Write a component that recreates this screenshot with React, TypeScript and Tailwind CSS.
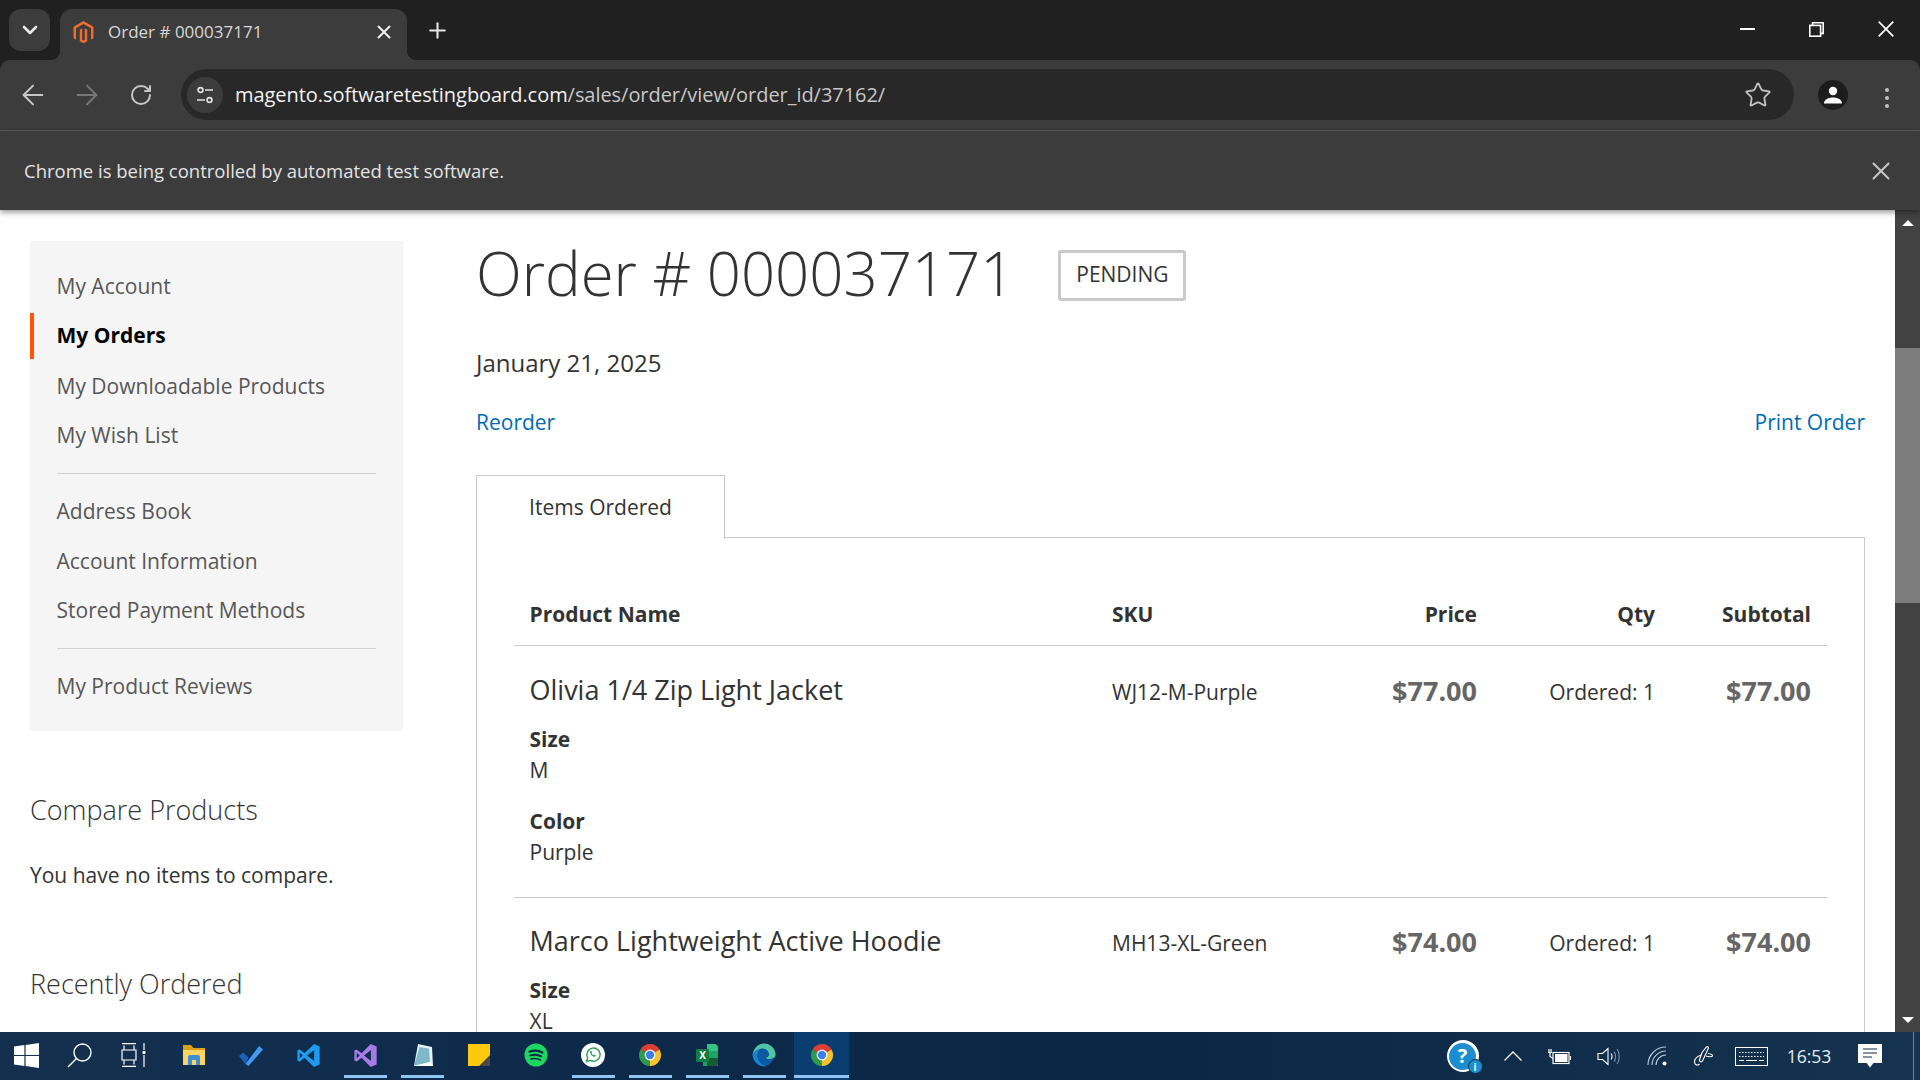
import React from 'react';
import { ArrowLeft, ArrowRight, RotateCw, Star, X, Plus, ChevronDown } from 'lucide-react';

const Magento = ({ size = 23 }: { size?: number }) => (
  <svg width={size} height={size} viewBox="0 0 24 24" fill="#ee6c2c">
    <path d="M12 0 1.6 6v12l2.6 1.5v-12L12 3l7.8 4.5v12l2.6-1.5V6z" />
    <path d="M13.3 19.5 12 20.3l-1.3-.8V7.5L8.1 9v12l3.9 2.3 3.900-2.300V9l-2.600-1.500z" />
  </svg>
);

const Chrome = () => (
  <svg width="24" height="24" viewBox="0 0 24 24">
    <path d="M12 12 2.47 6.5A11 11 0 0 1 21.53 6.5Z" fill="#dd3f33" />
    <path d="M12 12 21.53 6.5A11 11 0 0 1 12 23Z" fill="#f7c22e" />
    <path d="M12 12 12 23A11 11 0 0 1 2.47 6.5Z" fill="#2c9c4c" />
    <circle cx="12" cy="12" r="5.4" fill="#fff" />
    <circle cx="12" cy="12" r="4.2" fill="#3f7fe6" />
  </svg>
);

const TaskIcon = ({ children, line = false, active = false, w = 'w-[57px]' }: { children: React.ReactNode; line?: boolean; active?: boolean; w?: string }) => (
  <div className={`relative h-[48px] flex items-center justify-center pb-[2px] shrink-0 ${w} ${active ? 'bg-[#0a3d70]' : ''}`}>
    {children}
    {line && <div className={`absolute bottom-[2px] h-[3px] bg-[#8fc5ee] ${active ? 'left-0 right-0' : 'left-[7px] right-[7px]'}`} />}
  </div>
);

const NavItem = ({ label, cls }: { label: string; cls: string }) => (
  <div className={`flex items-center pl-[26.5px] pt-[2px] text-[21px] text-[#575757] ${cls}`}>{label}</div>
);

const Row = ({ name, sku, price, options, cls }: { name: string; sku: string; price: string; options: [string, string][]; cls: string }) => (
  <div className={`grid grid-cols-[598px_235px_130px_178px_156px] ${cls}`}>
    <div className="pl-[15.5px]">
      <div className="text-[27px] leading-[38px] text-[#333]">{name}</div>
      <div className="mt-[15px]">
        {options.map(([k, v]) => (
          <div key={k} className="mb-[20px]">
            <div className="text-[21px] leading-[31px] font-bold text-[#333]">{k}</div>
            <div className="text-[21px] leading-[31px] text-[#333]">{v}</div>
          </div>
        ))}
      </div>
    </div>
    <div className="text-[21px] leading-[38px] pt-[2px] text-[#333]">{sku}</div>
    <div className="text-[27px] leading-[38px] pt-[1px] font-bold text-[#666] text-right">{price}</div>
    <div className="text-[21px] leading-[38px] pt-[2px] text-[#333] text-right">Ordered: 1</div>
    <div className="text-[27px] leading-[38px] pt-[1px] font-bold text-[#666] text-right">{price}</div>
  </div>
);

export default function App() {
  return (
    <div className="h-screen w-screen overflow-hidden flex flex-col bg-white font-['Open_Sans',sans-serif]">
      {/* Tab strip */}
      <div className="h-[60px] shrink-0 bg-[#202020] flex items-start pt-[9px] pl-[9px] text-white">
        <div className="w-[41px] h-[42px] rounded-[12px] bg-[#3c3c3c] flex items-center justify-center">
          <ChevronDown size={24} strokeWidth={2.6} color="#e8e8e8" />
        </div>
        <div className="relative ml-[10px] w-[347px] h-[51px] rounded-t-[12px] bg-[#3c3c3c] flex items-center pl-[12px] pb-[5px]">
          <Magento />
          <span className="ml-[13px] text-[17px] text-[#d8d8d8]">Order # 000037171</span>
          <X size={22} strokeWidth={2.2} color="#f0f0f0" className="ml-auto mr-[12px]" />
          <div className="absolute bottom-0 left-[-10px] w-[10px] h-[10px] bg-[radial-gradient(circle_at_0_0,#202020_10px,#3c3c3c_10.5px)]" />
          <div className="absolute bottom-0 right-[-10px] w-[10px] h-[10px] bg-[radial-gradient(circle_at_100%_0,#202020_10px,#3c3c3c_10.5px)]" />
        </div>
        <div className="ml-[18px] h-[42px] flex items-center"><Plus size={25} strokeWidth={2} color="#e8e8e8" /></div>
        <div className="ml-auto h-[42px] flex items-center pb-[2px]">
          <div className="w-[69px] flex justify-center"><div className="w-[15px] h-[2px] bg-white" /></div>
          <div className="w-[69px] flex justify-center">
            <svg width="15" height="15" viewBox="0 0 15 15" fill="none" stroke="#fff" strokeWidth="1.6"><rect x="0.8" y="3.4" width="10.8" height="10.8" /><path d="M3.6 3.2V.8h10.6v10.6h-2.4" /></svg>
          </div>
          <div className="w-[69px] flex justify-center">
            <svg width="16" height="16" viewBox="0 0 16 16" stroke="#fff" strokeWidth="1.7"><path d="M.7.7l14.6 14.6M15.3.7.7 15.3" /></svg>
          </div>
        </div>
      </div>

      {/* Toolbar */}
      <div className="h-[71px] shrink-0 bg-[#202020]">
        <div className="h-full rounded-t-[10px] bg-[#3c3c3c] border-b border-b-[#5c5c5c] flex items-start pt-[9px]">
          <div className="w-[181px] h-[51px] flex items-center shrink-0">
            <ArrowLeft size={32} strokeWidth={1.5} color="#c7c7c7" className="ml-[17px]" />
            <ArrowRight size={32} strokeWidth={1.5} color="#777" className="ml-[22px]" />
            <RotateCw size={24} strokeWidth={2} color="#c7c7c7" className="ml-[26px]" />
          </div>
          <div className="w-[1613px] h-[51px] rounded-full bg-[#282828] flex items-center pl-[6px] shrink-0">
            <div className="w-[36px] h-[36px] rounded-full bg-[#3c3c3c] flex items-center justify-center">
              <svg width="18" height="18" viewBox="0 0 18 18" fill="none" stroke="#e3e3e3" strokeWidth="1.7"><circle cx="4.5" cy="4" r="2.4" /><circle cx="13.5" cy="14" r="2.4" /><path d="M9 4h8M1 14h8" /></svg>
            </div>
            <span className="ml-[12px] text-[20px] tracking-[-0.05px] text-[#f2f2f2]">magento.softwaretestingboard.com<span className="text-[#c7c7c7]">/sales/order/view/order_id/37162/</span></span>
            <Star size={28} strokeWidth={1.6} color="#c0c0c0" className="ml-auto mr-[22px]" />
          </div>
          <div className="ml-[24px] w-[30px] h-[30px] mt-[11px] rounded-full bg-[#1c1c1c] flex items-center justify-center">
            <svg width="20" height="20" viewBox="0 0 20 20" fill="#fff"><circle cx="10" cy="6" r="4.2" /><path d="M1 18.5c0-4 4.5-6 9-6s9 2 9 6z" /></svg>
          </div>
          <div className="ml-[37px] mt-[19px] flex flex-col gap-[4px]">
            <div className="w-[4px] h-[4px] rounded-full bg-[#c0c0c0]" /><div className="w-[4px] h-[4px] rounded-full bg-[#c0c0c0]" /><div className="w-[4px] h-[4px] rounded-full bg-[#c0c0c0]" />
          </div>
        </div>
      </div>

      {/* Infobar */}
      <div className="relative z-10 h-[79px] shrink-0 bg-[#3c3c3c] flex items-center pl-[24px] shadow-[0_2px_6px_rgba(0,0,0,0.45)]">
        <span className="text-[18.5px] text-[#e3e3e3]">Chrome is being controlled by automated test software.</span>
        <X size={30} strokeWidth={1.6} color="#c7c7c7" className="ml-auto mr-[24px]" />
      </div>

      {/* Page */}
      <div className="flex-1 min-h-0 flex overflow-hidden">
        <div className="w-[1895px] shrink-0 flex items-start overflow-hidden">
          <aside className="ml-[30px] mt-[31px] w-[373px] shrink-0">
            <div className="bg-[#f5f5f5] py-[20px]">
              <NavItem label="My Account" cls="h-[50px]" />
              <div className="mt-[2px] h-[46px] flex items-center pl-[22.5px] border-l-[4px] border-l-[#ff5501] text-[21px] font-bold text-black">My Orders</div>
              <NavItem label="My Downloadable Products" cls="mt-[2px] h-[50px]" />
              <NavItem label="My Wish List" cls="h-[48px]" />
              <div className="mx-[27px] mt-[14px] h-px bg-[#d1d1d1]" />
              <NavItem label="Address Book" cls="mt-[12px] h-[50px]" />
              <NavItem label="Account Information" cls="h-[50px]" />
              <NavItem label="Stored Payment Methods" cls="h-[48px]" />
              <div className="mx-[27px] mt-[14px] h-px bg-[#d1d1d1]" />
              <NavItem label="My Product Reviews" cls="mt-[12px] h-[50px]" />
            </div>
            <div className="mt-[60px] text-[27px] leading-[38px] font-light text-[#333]">Compare Products</div>
            <div className="mt-[31px] text-[21px] leading-[31px] text-[#333]">You have no items to compare.</div>
            <div className="mt-[74px] text-[27px] leading-[38px] font-light text-[#333]">Recently Ordered</div>
          </aside>

          <main className="ml-[73px] w-[1389px] shrink-0">
            <div className="mt-[28px] h-[70px] flex items-center">
              <h1 className="text-[59.9px] leading-[70px] font-light text-[#333]">Order # 000037171</h1>
              <div className="ml-[44px] mt-[4px] w-[128px] h-[51px] border-[3px] border-[#c9c9c9] rounded-[3px] flex items-center justify-center text-[21px] uppercase text-[#333]">Pending</div>
            </div>
            <div className="mt-[38px] text-[24px] leading-[33px] text-[#333]">January 21, 2025</div>
            <div className="mt-[28px] flex justify-between text-[21px] leading-[31px] text-[#006bb4]">
              <span>Reorder</span><span>Print Order</span>
            </div>
            <div className="relative mt-[99px] h-[1000px] border border-[#c9c9c9]">
              <div className="absolute left-[-1px] top-[-63px] w-[249px] h-[64px] border border-[#c9c9c9] border-b-0 bg-white flex items-center justify-center text-[21px] text-[#333]">Items Ordered</div>
              <div className="mx-[37px] mt-[61px]">
                <div className="grid grid-cols-[598px_235px_130px_178px_156px] h-[47px] border-b border-[#c9c9c9] text-[21px] font-bold text-[#333]">
                  <div className="pl-[15.5px]">Product Name</div>
                  <div>SKU</div>
                  <div className="text-right">Price</div>
                  <div className="text-right">Qty</div>
                  <div className="text-right">Subtotal</div>
                </div>
                <Row cls="pt-[25px] h-[252px] border-b border-[#c9c9c9]" name="Olivia 1/4 Zip Light Jacket" sku="WJ12-M-Purple" price="$77.00" options={[['Size', 'M'], ['Color', 'Purple']]} />
                <Row cls="pt-[24px]" name="Marco Lightweight Active Hoodie" sku="MH13-XL-Green" price="$74.00" options={[['Size', 'XL']]} />
              </div>
            </div>
          </main>
        </div>
        <div className="w-[25px] shrink-0 bg-[#424242] flex flex-col items-center">
          <div className="h-[25px] flex items-center justify-center"><div className="w-0 h-0 border-x-[6px] border-x-transparent border-b-[6px] border-b-white" /></div>
          <div className="mt-[113px] w-full h-[255px] bg-[#7d7d7d]" />
          <div className="mt-auto h-[25px] flex items-center justify-center"><div className="w-0 h-0 border-x-[6px] border-x-transparent border-t-[6px] border-t-white" /></div>
        </div>
      </div>

      {/* Taskbar */}
      <div className="h-[48px] shrink-0 flex items-center bg-[linear-gradient(90deg,#15304f_0%,#0d2a4b_30%,#0b2745_60%,#15324f_100%)]">
        <TaskIcon w="w-[52px]">
          <svg width="25" height="25" viewBox="0 0 25 25" fill="#fff"><path d="M0 3.6 10.4 2.1V12H0zM11.6 1.9 25 0v12H11.6zM0 13h10.4v9.9L0 21.4zM11.6 13H25v12l-13.4-1.9z" /></svg>
        </TaskIcon>
        <TaskIcon w="w-[55px]">
          <svg width="26" height="26" viewBox="0 0 26 26" fill="none" stroke="#fff" strokeWidth="1.4"><circle cx="15.5" cy="10.5" r="8.5" /><path d="M9.5 16.5 1 25" /></svg>
        </TaskIcon>
        <TaskIcon w="w-[53px]">
          <svg width="26" height="24" viewBox="0 0 26 24" fill="none" stroke="#fff" strokeWidth="1.2"><path d="M1 .6h14M1 23.4h14M3 2.4v4M13 2.4v4M1 7h14v10H1zM3 17.500v4M13 17.500v4M23 0v7M23 12v12" /><rect x="21.6" y="8" width="2.8" height="3" fill="#fff" stroke="none" /></svg>
        </TaskIcon>
        <TaskIcon w="w-[62.5px] pl-[6px]">
          <svg width="24" height="24" viewBox="0 0 24 24"><path d="M1 2h8l2.5 3H23v3H1z" fill="#d9a21b" /><path d="M1 7h22v15H1z" fill="#fcd462" /><path d="M6 22V14a2 2 0 0 1 2-2h8a2 2 0 0 1 2 2v8h-4v-5h-4v5z" fill="#3f8fd6" /></svg>
        </TaskIcon>
        <TaskIcon>
          <svg width="26" height="26" viewBox="0 0 26 26"><path d="M1 14l4-3.500 5.500 5L7.500 22z" fill="#1a62c2" /><path d="M7.500 22 21 4l4 3.500L10.500 24z" fill="#3f9bf0" /></svg>
        </TaskIcon>
        <TaskIcon>
          <svg width="25" height="25" viewBox="0 0 24 24"><path fillRule="evenodd" d="M17.3 1 8.2 9.8 3.4 6.1 1.3 7.2v9.6l2.1 1.1 4.8-3.7 9.1 8.8 5.4-2.3V3.300zM17.400 6.800v10.400L10.600 12zM3.600 9.400 6.400 12l-2.800 2.600z" fill="#1f9cf0" /></svg>
        </TaskIcon>
        <TaskIcon line>
          <svg width="25" height="25" viewBox="0 0 24 24"><path fillRule="evenodd" d="M17 1 8.200 9.800 3.600 6.200 1.300 7.200v9.600l2.300 1 4.600-3.600L17 23l5.700-2.300V3.300zM17.200 6.800v10.400L10.600 12zM3.600 9.400 6.400 12l-2.800 2.600z" fill="#a87ae6" /></svg>
        </TaskIcon>
        <TaskIcon line>
          <svg width="24" height="26" viewBox="0 0 24 26"><path d="M4 24 8 2l14 3 1 19z" fill="#e6f2f5" /><path d="M4 24 9.500 5 19 6.500 20 20z" fill="#7fb8ca" /><path d="M4 24l16-4 3 4z" fill="#fff" /></svg>
        </TaskIcon>
        <TaskIcon>
          <svg width="24" height="24" viewBox="0 0 24 24"><path d="M1 1h22v22H1z" fill="#ffc90e" /><path d="M12 23 23 12v11z" fill="#4a4a48" /></svg>
        </TaskIcon>
        <TaskIcon>
          <svg width="24" height="24" viewBox="0 0 24 24"><circle cx="12" cy="12" r="11.500" fill="#1ed760" /><g fill="none" stroke="#0e2a45" strokeLinecap="round"><path d="M5.500 8.600c4.500-1.300 9.500-1 13 1" strokeWidth="2.200" /><path d="M6.300 12.400c3.800-1 8-.8 11 1" strokeWidth="1.900" /><path d="M7 16c3.200-.8 6.500-.6 9.400 1" strokeWidth="1.600" /></g></svg>
        </TaskIcon>
        <TaskIcon line>
          <svg width="24" height="24" viewBox="0 0 24 24"><circle cx="12" cy="12" r="12" fill="#fff" /><path d="M5.500 18.600 6.600 14.600A6.600 6.600 0 1 1 9.300 17.400z" fill="none" stroke="#2f9e55" strokeWidth="1.400" /><path d="M9.500 8.300c-.7.8-.4 2.200.7 3.600 1.200 1.400 2.600 2.100 3.700 1.700.6-.2 1-.8.8-1.200l-1.300-.8-.7.600c-.8-.2-1.700-1-2.100-1.900l.5-.8-.7-1.300c-.3-.2-.6-.1-.9.100z" fill="#2f9e55" /></svg>
        </TaskIcon>
        <TaskIcon line><Chrome /></TaskIcon>
        <TaskIcon line>
          <svg width="24" height="24" viewBox="0 0 24 24"><path d="M8 7h15v16H8z" fill="#1f9d63" /><path d="M12 1h7a4 4 0 0 1 4 4v3H12z" fill="#33c481" /><path d="M12 8h11v7H12z" fill="#21a366" /><path d="M12 15h11v5a3 3 0 0 1-3 3h-8z" fill="#185c37" /><rect x="1" y="6" width="13" height="13" rx="1.200" fill="#107c41" /><text x="7.500" y="16" textAnchor="middle" fontSize="10" fontWeight="700" fill="#fff">X</text></svg>
        </TaskIcon>
        <TaskIcon line>
          <svg width="24" height="24" viewBox="0 0 24 24"><path d="M12 .5A11.500 11.500 0 0 1 23.500 12c0 3-3 4.500-6 4.500-2.500 0-4-1-4.500-2 2 .3 4-1 3.700-3.500C16.200 7 13 5.500 10 5.700 6 6 2.300 8.500.6 12.500 1 5.500 6 .5 12 .5z" fill="#4fc6a8" /><path d="M.6 12C2 8 5.500 5.800 9.500 5.800c-3 1.500-4.500 5-3.500 9 .8 3.500 4 7 9 8.300C7 24.800 1 19 .6 12z" fill="#1583d4" /><path d="M6 15c-.8-4 .8-7.700 3.800-9.200 3-.2 6.400 1.200 6.900 4.700.3 2.500-1.700 3.800-3.700 3.500.7 1.500 2.500 2.200 4.500 2 2 0 4-.8 5-2.500-1 4.500-4.500 8-8.500 9.500C9.800 22 6.800 18.500 6 15z" fill="#0c59a4" /></svg>
        </TaskIcon>
        <div className="ml-[1.5px]"><TaskIcon w="w-[55px]" line active><Chrome /></TaskIcon></div>

        <div className="ml-auto flex items-center h-full">
          <div className="relative w-[32px] h-[32px] rounded-full bg-white flex items-center justify-center">
            <div className="w-[27px] h-[27px] rounded-full bg-[#1c8ecf] flex items-center justify-center text-white font-bold text-[20px] leading-none">?</div>
            <div className="absolute right-[-4px] bottom-[-2px] w-[15px] h-[15px] rounded-full bg-[#1c8ecf] border border-[#0c2848] flex items-center justify-center text-white font-bold text-[10px] leading-none">i</div>
          </div>
          <svg className="ml-[25px]" width="18" height="10" viewBox="0 0 18 10" fill="none" stroke="#fff" strokeWidth="1.3"><path d="M.5 9.500 9 1l8.500 8.500" /></svg>
          <svg className="ml-[25.5px]" width="24" height="17" viewBox="0 0 24 17" fill="none" stroke="#fff" strokeWidth="1.2"><rect x="6" y="4.500" width="16" height="11" /><rect x="8" y="6" width="12.500" height="8" fill="#fff" stroke="none" /><path d="M23.500 8v4M1 4.500h4M2 1v3M4 1v3M3 4.500v4l3 2" /></svg>
          <svg className="ml-[26px]" width="24" height="19" viewBox="0 0 24 19" fill="none" stroke="#fff" strokeWidth="1.1"><path d="M1 6.500h4.500L11 1.500v16l-5.500-5H1z" /><path d="M14 6.500c1.300 1.500 1.300 4.500 0 6" /><path d="M17 4.500c2 2.500 2 8 0 10" stroke="#7d93ad" /><path d="M20 2c3 3.500 3 11.500 0 15" stroke="#7d93ad" /></svg>
          <svg className="ml-[26px]" width="22" height="20" viewBox="0 0 22 20" fill="none" strokeWidth="1.2"><path d="M1 19C1 9 9 1 19 1" stroke="#b8c5d5" /><path d="M5 19c0-7.700 6.300-14 14-14" stroke="#b8c5d5" /><path d="M9 19c0-5.500 4.500-10 10-10" stroke="#b8c5d5" /><circle cx="17.500" cy="17.500" r="2" fill="#fff" /></svg>
          <svg className="ml-[24px]" width="21" height="21" viewBox="0 0 21 21" fill="none" stroke="#fff" strokeWidth="1.1"><path d="M9 6.500 13.500 1c1-.8 2.400.2 1.800 1.500L9.500 15c-1 1.500-3.500.8-3-1z" /><path d="M15 7.500c3 .3 5 1.500 4.500 2.500S15 11 13 10" /><path d="M8 9c-4 1.500-6.500 4-6.500 7 0 3 3 4 5 2" /></svg>
          <svg className="ml-[21px]" width="33" height="19" viewBox="0 0 33 19" fill="none" stroke="#fff" strokeWidth="1"><rect x=".5" y=".5" width="32" height="18" /><path d="M4 5.500h25M4 9.500h25" strokeDasharray="1.500 1.500" /><path d="M4 13.500h5M11 13.500h11M24 13.500h5" /></svg>
          <span className="ml-[18px] w-[46px] text-center text-[17.5px] text-[#e6ebf1]">16:53</span>
          <svg className="ml-[26px]" width="24" height="24" viewBox="0 0 24 24"><path d="M0 0h24v19h-8.500L12 23.500 8.500 19H0z" fill="#fff" /><path d="M5 5h14M5 9h14M5 13h9" stroke="#0f2a46" strokeWidth="1" /></svg>
          <div className="ml-[31px] mr-[6px] w-[1px] h-full bg-[#6c8099]" />
        </div>
      </div>
    </div>
  );
}
